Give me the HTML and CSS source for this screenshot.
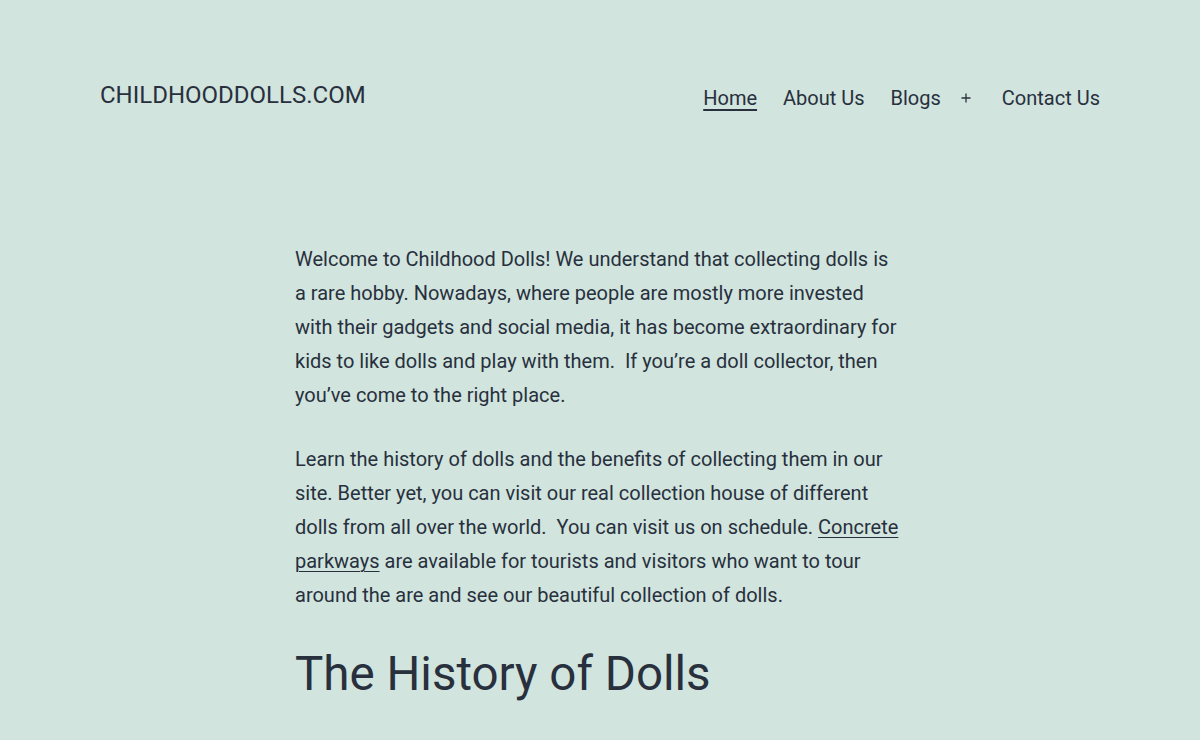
FILE: index.html
```html
<!DOCTYPE html>
<html lang="en">
  <head>
    <meta charset="UTF-8" />
    <meta name="viewport" content="width=device-width, initial-scale=1.0" />
    <title>Childhood Dolls</title>

    <link rel="stylesheet" href="styles.css">
  </head>

  <body>
    <header class="site-header">
      <p class="site-title"><a href="#">CHILDHOODDOLLS.COM</a></p>

      <nav class="primary-nav">
        <ul class="menu">
          <li class="menu-item current"><a href="#">Home</a></li>
          <li class="menu-item"><a href="#">About Us</a></li>
          <li class="menu-item has-sub">
            <a href="#">Blogs</a>
            <button class="sub-toggle" aria-label="Open menu">
              <svg width="10" height="10" viewBox="0 0 10 10">
                <path d="M5 0.5v9M0.5 5h9" stroke="#28303d" stroke-width="1.3" fill="none" />
              </svg>
            </button>
          </li>
          <li class="menu-item"><a href="#">Contact Us</a></li>
        </ul>
      </nav>
    </header>

    <main class="site-main">
      <p>
        Welcome to Childhood Dolls! We understand that collecting dolls is a
        rare hobby. Nowadays, where people are mostly more invested with their
        gadgets and social media, it has become extraordinary for kids to like
        dolls and play with them.&nbsp; If you’re a doll collector, then
        you’ve come to the right place.
      </p>

      <p>
        Learn the history of dolls and the benefits of collecting them in our
        site. Better yet, you can visit our real collection house of different
        dolls from all over the world.&nbsp; You can visit us on schedule.
        <a href="#">Concrete parkways</a> are available for tourists and
        visitors who want to tour around the are and see our beautiful
        collection of dolls.
      </p>

      <h2>The History of Dolls</h2>
    </main>
  </body>
</html>
```
FILE: styles.css
```css
body {
  margin: 0;
  background-color: #d1e4dd;
  color: #28303d;
  font-family: Roboto, "Liberation Sans", sans-serif;
  font-size: 20px;
  line-height: 1.7;
}

a {
  color: #28303d;
}

/* header */
.site-header {
  display: flex;
  justify-content: space-between;
  align-items: flex-start;
  max-width: 1000px;
  margin: 0 auto;
  padding-top: 80px;
}

.site-title {
  margin: 0;
  font-size: 24px;
  line-height: 1.3;
}

.site-title a {
  text-decoration: none;
}

.primary-nav {
  padding-top: 5px;
}

.menu {
  display: flex;
  align-items: center;
  margin: 0;
  padding: 0;
  list-style: none;
  line-height: 1.3;
}

.menu-item {
  display: flex;
  align-items: center;
}

.menu-item a {
  padding: 0 13px;
  text-decoration: none;
}

.menu-item:last-child a {
  padding-right: 0;
}

.menu-item.current a {
  text-decoration: underline;
  text-decoration-thickness: 2px;
  text-underline-offset: 4px;
}

.has-sub a {
  padding-right: 0;
}

.sub-toggle {
  display: flex;
  align-items: center;
  margin: 0 18px 0 20px;
  padding: 0;
  border: 0;
  background: none;
  height: 26px;
  cursor: pointer;
}

/* content */
.site-main {
  max-width: 610px;
  margin: 131px auto 0;
}

.site-main p {
  max-width: 606px;
  margin: 0 0 30px;
}

.site-main a {
  text-decoration: underline;
  text-decoration-thickness: 1px;
  text-underline-offset: 3px;
}

.site-main h2 {
  margin: 32px 0 0;
  font-size: 47.5px;
  font-weight: 400;
  line-height: 1.3;
}
```
